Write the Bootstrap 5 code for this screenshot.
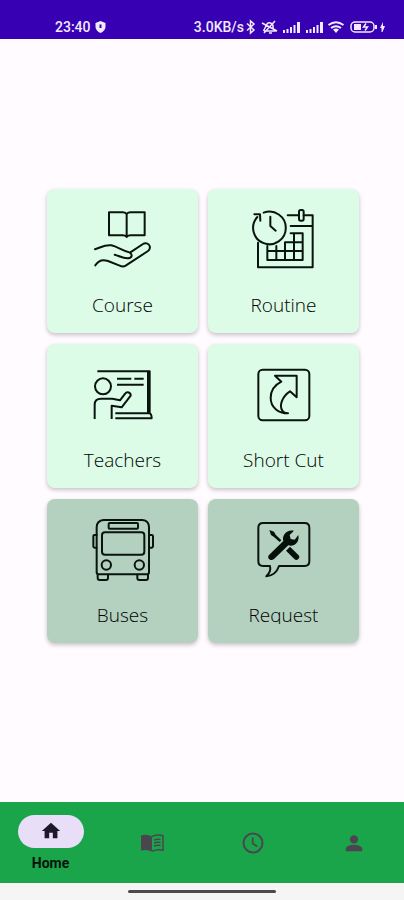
<!DOCTYPE html>
<html lang="en">
<head>
<meta charset="utf-8">
<meta name="viewport" content="width=device-width, initial-scale=1">
<title>Home</title>
<link href="https://cdn.jsdelivr.net/npm/bootstrap@5.3.0/dist/css/bootstrap.min.css" rel="stylesheet">
<style>
  body { background: #fffbfe; font-family: Roboto, sans-serif; }
  svg { display: block; flex-shrink: 0; }
  .line-art { fill: none; stroke: #0a140e; stroke-width: 6; stroke-linecap: round; stroke-linejoin: round; }
  .status { background: #3700b3; color: #f1eafc; height: 39px; padding: 14px 18px 0 55px; font-size: 14px; font-weight: 500; line-height: 26px; }
  .tiles { display: grid; grid-template-columns: 1fr 1fr; gap: 11px 10px; padding: 0 45px 10px 47px; }
  .tile { height: 144px; padding: 18px 0 0; border: 0; border-radius: 8px; background: #dcfce7; box-shadow: 0 2px 4px rgba(60, 40, 60, .28); color: #000; }
  .tile-dim { background: #b4d1c0; }
  .tile-label { font: 300 19px/26px "Open Sans", "Noto Sans", sans-serif; margin-top: 19px; }
  .tile-label-short { height: 22px; overflow: hidden; }
  .tabs { background: #1aa54b; height: 81px; color: #4b454f; }
  .tab { border: 0; background: none; color: inherit; padding: 0; font-size: 14px; line-height: 16px; font-weight: 700; }
  .tab-active { color: #06140b; }
  .pill { width: 66px; height: 33px; border-radius: 17px; background: #e8def8; color: #1d192b; margin-bottom: 7px; }
  .gesture { background: #f5f5f5; height: 17px; }
  .gesture div { width: 148px; height: 3px; border-radius: 2px; background: #4c4a4d; }
</style>
</head>
<body class="d-flex flex-column min-vh-100">
<header class="status d-flex justify-content-between">
  <div class="d-flex align-items-center gap-1">
    <span>23:40</span>
    <svg width="11" height="12" viewBox="0 0 11 12"><path fill="currentColor" d="M5.500 0 10.500 2V6Q10 10 5.500 12Q1 10 .5 6V2Z"/><path d="M5.500 3.500v3.500" stroke="#3700b3" stroke-width="2"/></svg>
  </div>
  <div class="d-flex align-items-center">
    <span>3.0KB/s</span>
    <svg width="142" height="16" viewBox="0 0 142 16" fill="none" stroke="currentColor" stroke-width="1.500">
      <path d="M3 4.500 10 11 6.500 14V2L10 5 3 11.500"/>
      <path d="M20 12h11l-2-3V6.500a3.500 3.500 0 0 0-6-1.500L21 9l-1.500 3M25 14h3M18 4l15 8M31 2 20 14"/>
      <g fill="currentColor" stroke="none">
        <path d="M39 11h2v3h-2zM42.500 10h2v4h-2zM46 8h2v6h-2zM49.500 6h2v8h-2zM53 3h3v11h-3z"/>
        <path d="M62 11h2v3h-2zM65.500 10h2v4h-2zM69 8h2v6h-2zM72.500 6h2v8h-2zM76 3h3v11h-3z"/>
        <path d="M92 14 89 10.500q3-2 6 0z"/>
        <path d="M137.500 13v-4h-1.500l3-6v4h2l-2.500 6z"/>
      </g>
      <path stroke-width="2" d="M84.500 6q7.500-5.500 15 0M87 9q5-3.500 10 0"/>
      <rect x="107" y="3" width="23" height="10" rx="4"/>
      <path stroke="none" fill="currentColor" d="M110 5h7v6h-7zM131 6h2v4h-2z"/>
      <path d="M122 4.500 119.500 8h4L121 11.500"/>
    </svg>
  </div>
</header>

<main class="flex-grow-1 d-flex flex-column justify-content-center">
  <div class="tiles">
    <button type="button" class="tile d-flex flex-column align-items-center">
      <svg class="line-art" width="66" height="66" viewBox="148 81 198 198">
        <path d="M258 102q-5-5-12-5h-41v69h41q8 0 12 5 4-5 12-5h42V97h-42q-8 0-12 5zV171"/>
        <path d="M163 208c17-5 29-15 49-12 18 4 30 14 56 22l39-26c7-5 17-2 20 6 2 6 0 11-5 15l-67 44q-8 5-18 0l-35-14c-17-6-29-2-38 13M268 218c9 8 5 17-8 17-14-1-24-7-38-11"/>
      </svg>
      <span class="tile-label">Course</span>
    </button>
    <button type="button" class="tile d-flex flex-column align-items-center">
      <svg class="line-art" width="66" height="66" viewBox="151 81 198 198">
        <path d="M189 98a49 49 0 1 1-19 13M161 103l17 0 1 19M209 110v28l16 14"/>
        <path d="M261 106h31M309 106h27v156H172v-74M270 138h64"/>
        <rect x="295" y="90" width="14" height="32" rx="5"/>
        <path d="M270 160h36v80H200v-42M227 198v42M253 188v52M280 160v80M253 187h53M200 213h106"/>
      </svg>
      <span class="tile-label">Routine</span>
    </button>
    <button type="button" class="tile d-flex flex-column align-items-center">
      <svg class="line-art" width="66" height="66" viewBox="148 81 198 198">
        <path stroke-linecap="butt" d="M170 109h157v125M229 131h43M281 131h28M229 149h80M224 250h109q0-15-8-15H224M322 112v122"/>
        <circle cx="187" cy="154" r="24"/>
        <path stroke-linecap="butt" d="M162 252v-43q0-18 19-18h34l23 5 16-21c5-7 17-2 16 7l-27 35-30-5v40"/>
      </svg>
      <span class="tile-label">Teachers</span>
    </button>
    <button type="button" class="tile d-flex flex-column align-items-center">
      <svg class="line-art" width="66" height="66" viewBox="151 81 198 198">
        <rect x="173" y="104" width="153" height="152" rx="13"/>
        <path d="M223 122h65v65l-20-18c-22 14-34 42-23 58q4 8 17 8c-29 0-52-18-52-46 0-21 12-39 32-49z"/>
      </svg>
      <span class="tile-label">Short Cut</span>
    </button>
    <button type="button" class="tile tile-dim d-flex flex-column align-items-center">
      <svg class="line-art" width="66" height="66" viewBox="148 81 198 198">
        <path d="M189 90h116q20 2 20 22v135q0 6-6 6H174q-6 0-6-6V112q0-20 21-22z"/>
        <rect x="204" y="99" width="88" height="17" rx="3"/>
        <rect x="184" y="127" width="127" height="67" rx="9"/>
        <circle cx="197" cy="225" r="14"/><circle cx="296" cy="225" r="14"/>
        <path d="M171 254v10q0 6 6 6h19q6 0 6-6v-10M290 254v10q0 6 6 6h20q6 0 6-6v-10M168 135h-7q-3 0-3 3v31q0 4 4 4h6M325 135h8q4 0 4 3v31q0 4-4 4h-8"/>
      </svg>
      <span class="tile-label">Buses</span>
    </button>
    <button type="button" class="tile tile-dim d-flex flex-column align-items-center">
      <svg class="line-art" width="66" height="66" viewBox="151 81 198 198">
        <path d="M187 99h125q14 0 14 14v101q0 14-14 14h-77q-9 28-38 31 15-14 11-31h-21q-14 0-14-14V113q0-14 14-14z"/>
        <g stroke="none" fill="#06100a">
          <path d="M206 120 220 125 225 134 242 151 237 156 219 140 211 135Z"/>
          <path d="M268 170 293 195a8 8 0 0 1-12 12L256 182Z"/>
          <path d="M205 195 248 153c-5-17 10-36 32-31l-13 13 3 12 12 2 11-14c5 22-14 37-30 31L220 207c-10 9-23-3-15-12Z"/>
        </g>
      </svg>
      <span class="tile-label tile-label-short">Request</span>
    </button>
  </div>
</main>

<nav class="tabs row g-0" aria-label="Main">
  <button type="button" class="tab tab-active col d-flex flex-column align-items-center justify-content-center" aria-current="page">
    <span class="pill d-flex align-items-center justify-content-center">
      <svg width="22" height="22" viewBox="0 0 24 24" fill="currentColor"><path d="M10 20v-6h4v6h5v-8h3L12 3 2 12h3v8z"/></svg>
    </span>
    <span>Home</span>
  </button>
  <button type="button" class="tab col d-flex align-items-center justify-content-center" aria-label="Courses">
    <svg width="24" height="22" viewBox="0 0 24 22"><path fill="currentColor" d="M12 4.500Q7 1.500 1 3.500v15q6-1.500 11 1z"/><path fill="none" stroke="currentColor" stroke-width="1.500" d="M12 4.500q5-2.500 11-.8v14.600q-6-1.300-11 1M14 8q3-1 6.500-.5M14 11q3-1 6.500-.5M14 14q3-1 6.500-.5"/></svg>
  </button>
  <button type="button" class="tab col d-flex align-items-center justify-content-center" aria-label="Routine">
    <svg width="24" height="24" viewBox="0 0 24 24" fill="none" stroke="currentColor" stroke-width="2"><circle cx="12" cy="12" r="9.500"/><path stroke-width="1.700" d="M11.700 6.500v6l4.500 3"/></svg>
  </button>
  <button type="button" class="tab col d-flex align-items-center justify-content-center" aria-label="Profile">
    <svg width="22" height="22" viewBox="0 0 24 24" fill="currentColor"><circle cx="12" cy="8" r="4.500"/><path d="M3 21v-2.500c0-3 6-4.500 9-4.500s9 1.500 9 4.500v2.500z"/></svg>
  </button>
</nav>
<div class="gesture d-flex align-items-center justify-content-center"><div></div></div>
<script src="https://cdn.jsdelivr.net/npm/bootstrap@5.3.0/dist/js/bootstrap.bundle.min.js"></script>
</body>
</html>
